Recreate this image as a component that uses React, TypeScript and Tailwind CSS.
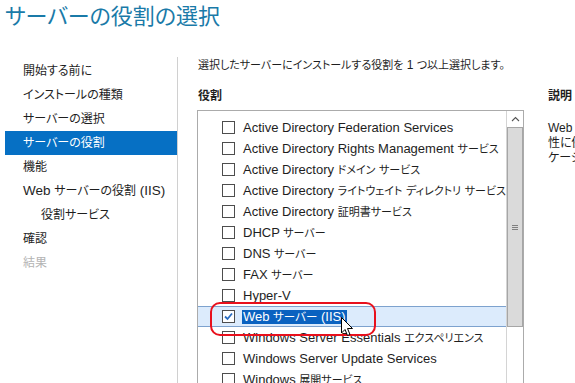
import React from 'react';

const navItems: { label: string; indent?: boolean; active?: boolean; disabled?: boolean }[] = [
  { label: '開始する前に' },
  { label: 'インストールの種類' },
  { label: 'サーバーの選択' },
  { label: 'サーバーの役割', active: true },
  { label: '機能' },
  { label: 'Web サーバーの役割 (IIS)' },
  { label: '役割サービス', indent: true },
  { label: '確認' },
  { label: '結果', disabled: true },
];

const roles: { label: string; checked?: boolean }[] = [
  { label: 'Active Directory Federation Services' },
  { label: 'Active Directory Rights Management サービス' },
  { label: 'Active Directory ドメイン サービス' },
  { label: 'Active Directory ライトウェイト ディレクトリ サービス' },
  { label: 'Active Directory 証明書サービス' },
  { label: 'DHCP サーバー' },
  { label: 'DNS サーバー' },
  { label: 'FAX サーバー' },
  { label: 'Hyper-V' },
  { label: 'Web サーバー (IIS)', checked: true },
  { label: 'Windows Server Essentials エクスペリエンス' },
  { label: 'Windows Server Update Services' },
  { label: 'Windows 展開サービス' },
];

// Japanese runs are set a little smaller, like the narrow UI font in the screenshot
const Mixed: React.FC<{ text: string; jp: string }> = ({ text, jp }) => (
  <>
    {text.split(/([\u3000-\u9fff\uff00-\uffef]+)/).map((part, i) =>
      i % 2 === 1 ? (
        <span key={i} className={jp}>
          {part}
        </span>
      ) : (
        <React.Fragment key={i}>{part}</React.Fragment>
      )
    )}
  </>
);

const Checkbox: React.FC<{ checked?: boolean }> = ({ checked }) => (
  <div className="w-[13px] h-[13px] border border-[#4d4d4d] bg-white flex items-center justify-center shrink-0">
    {checked && (
      <svg width="11" height="11" viewBox="0 0 11 11">
        <path d="M2 5.5 L4.5 8 L9 2.5" fill="none" stroke="#2a6cc0" strokeWidth="1.8" />
      </svg>
    )}
  </div>
);

export default function App() {
  return (
    <div
      className="relative w-[575px] h-[383px] overflow-hidden bg-white text-[#1e1e1e] [font-feature-settings:'palt']"
      style={{ fontFamily: '"Liberation Sans", "Noto Sans CJK JP", sans-serif' }}
    >
      {/* Title */}
      <div className="h-[57px] pl-[5px] pt-[2px]">
        <h1 className="text-[22px] leading-[30px] text-[#1a7aa8] font-normal">サーバーの役割の選択</h1>
      </div>

      <div className="flex h-[326px]">
        {/* Left nav */}
        <div className="w-[178px] shrink-0 border-r border-[#d0d0d0] pl-[5px] pt-[2px]">
          {navItems.map((item) => (
            <div
              key={item.label}
              className={`h-[24px] flex items-center text-[13.5px] whitespace-nowrap ${item.indent ? 'pl-[36px]' : 'pl-[18px]'} ${
                item.active ? 'bg-[#0670c4] text-white' : item.disabled ? 'text-[#b4b4b4]' : ''
              }`}
            >
              <span>
                <Mixed text={item.label} jp="text-[12px]" />
              </span>
            </div>
          ))}
        </div>

        {/* Main */}
        <div className="flex pl-[19px]">
          <div className="w-[327px] shrink-0 flex flex-col">
            <div className="h-[17px] leading-[17px] text-[12px] whitespace-nowrap pl-[1px]">
              <Mixed text="選択したサーバーにインストールする役割を 1 つ以上選択します。" jp="text-[11px]" />
            </div>
            <div className="mt-[14px] h-[16px] leading-[16px] text-[12px] font-bold pl-[1px]">役割</div>

            {/* List box */}
            <div className="mt-[6px] flex-1 border border-[#ababab] flex">
              <div className="flex-1 pt-[6px]">
                {roles.map((r) => (
                  <div
                    key={r.label}
                    className={`h-[21px] flex items-center pl-[24px] gap-[8px] text-[13px] whitespace-nowrap ${
                      r.checked ? 'bg-[#dcebfc] border-y border-[#7da2ce]' : ''
                    }`}
                  >
                    <Checkbox checked={r.checked} />
                    {r.checked ? (
                      <span className="bg-[#0a62c0] text-white leading-[14px] px-[1px] -ml-[1px]">
                        <Mixed text={r.label} jp="text-[11.5px]" />
                      </span>
                    ) : (
                      <span>
                        <Mixed text={r.label} jp="text-[11px]" />
                      </span>
                    )}
                  </div>
                ))}
              </div>

              {/* Scrollbar */}
              <div className="w-[17px] shrink-0 border-l border-[#d4d4d4] flex flex-col">
                <div className="h-[16px] flex items-center justify-center">
                  <svg width="9" height="6" viewBox="0 0 9 6">
                    <path d="M1 5 L4.5 1.5 L8 5" fill="none" stroke="#555" strokeWidth="1.1" />
                  </svg>
                </div>
                <div className="h-[200px] bg-[#dadada] border border-[#a6a6a6] flex items-center justify-center">
                  <div className="flex flex-col gap-[1px]">
                    <div className="w-[6px] h-[1px] bg-[#808080]" />
                    <div className="w-[6px] h-[1px] bg-[#808080]" />
                    <div className="w-[6px] h-[1px] bg-[#808080]" />
                  </div>
                </div>
              </div>
            </div>
          </div>

          {/* Description */}
          <div className="pl-[24px] whitespace-nowrap">
            <div className="h-[17px]" />
            <div className="mt-[14px] h-[16px] leading-[16px] text-[12px] font-bold">説明</div>
            <div className="mt-[17px] text-[12px] leading-[15px]">
              <div>Web サーバー (IIS) は、信頼</div>
              <div>性に優れ、管理しやすく、</div>
              <div>ケージ</div>
            </div>
          </div>
        </div>
      </div>

      {/* Red highlight */}
      <div className="absolute left-[210px] top-[302px] w-[166px] h-[34px] border-2 border-[#e8101c] rounded-[10px]" />

      {/* Mouse cursor */}
      <svg className="absolute left-[341px] top-[317px]" width="13" height="20" viewBox="0 0 13 20">
        <path d="M0.5 0.5 L0.5 16 L4 12.5 L6.5 18.5 L9 17.5 L6.5 11.5 L11.5 11.5 Z" fill="white" stroke="black" strokeWidth="1" />
      </svg>
    </div>
  );
}
